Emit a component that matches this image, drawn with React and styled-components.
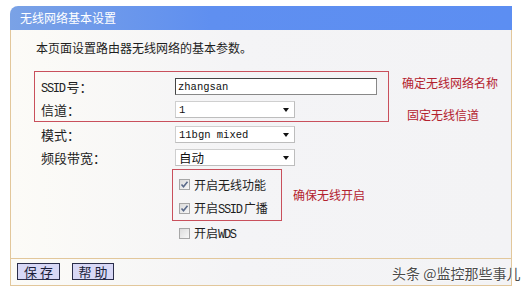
import React from 'react';
import styled, { createGlobalStyle } from 'styled-components';

const Global = createGlobalStyle`
  html, body { margin: 0; padding: 0; background: #fff; }
  body { font-family: "Noto Sans CJK SC", "Liberation Sans", sans-serif; color: #222; }
`;

const Page = styled.div`
  position: relative;
  width: 521px;
  height: 292px;
  box-sizing: border-box;
  padding: 6px 0 0 10px;
  overflow: hidden;
`;

const Panel = styled.div`
  width: 502px;
  display: flex;
  flex-direction: column;
`;

const Header = styled.div`
  height: 24px;
  line-height: 24px;
  padding-left: 10px;
  border-radius: 8px 0 0 0;
  background: linear-gradient(to right, #7aa2e6, #5f8ff0 40%, #5c8ef2);
  color: #fff;
  font-size: 12px;
`;

const Frame = styled.div`
  border: 1px solid #e2c79b;
  border-top: none;
  background: linear-gradient(to right, #fcfbf7, #f4f4f6 45%, #f3f3f5);
`;

const Body = styled.div`
  padding: 9px 0 13px 23px;
  display: flex;
  flex-direction: column;
`;

const Intro = styled.div`
  font-size: 12px;
  line-height: 18px;
  height: 18px;
  padding-left: 2px;
  margin-bottom: 14px;
  color: #1e1e1e;
`;

const Band = styled.div`
  display: flex;
  align-items: ${(p) => p.$align || 'flex-start'};
  margin-left: ${(p) => p.$indent || 0}px;
`;

const RedBox = styled.div`
  width: ${(p) => p.$w}px;
  box-sizing: border-box;
  border: 1px solid #c9505c;
  padding: ${(p) => p.$pt || 0}px 0 0 6px;
`;

const Notes = styled.div`
  display: flex;
  flex-direction: column;
  padding-left: ${(p) => p.$pl}px;
`;

const Note = styled.div`
  font-size: 12px;
  line-height: 16px;
  color: #b3222f;
  margin-top: ${(p) => p.$mt || 0}px;
  margin-left: ${(p) => p.$ml || 0}px;
`;

const Rows = styled.div`
  padding-left: 7px;
`;

const Row = styled.div`
  display: flex;
  align-items: center;
  height: ${(p) => p.$h || 23}px;
`;

const Label = styled.div`
  width: 134px;
  font-size: 13px;
  color: #222;
  white-space: nowrap;
`;

const Mono = styled.span`
  font-family: "Liberation Mono", monospace;
  font-size: 12px;
  letter-spacing: -1.3px;
  margin-right: 2px;
`;

const TextInput = styled.div`
  width: 202px;
  height: 17px;
  box-sizing: border-box;
  border: 1px solid #444;
  border-right-color: #888;
  border-bottom-color: #888;
  background: #fff;
  padding-left: 2px;
  display: flex;
  align-items: center;
  font-family: "Liberation Mono", monospace;
  font-size: 10.5px;
  color: #111;
`;

const Select = styled.div`
  width: 120px;
  height: 17px;
  box-sizing: border-box;
  border: 1px solid #cfcfcf;
  border-right-color: #bdbdbd;
  border-bottom-color: #bdbdbd;
  background: #fff;
  display: flex;
  align-items: center;
  justify-content: space-between;
  padding: 0 5px 0 3px;
  font-size: 12.5px;
  color: #111;
`;

const SelectMono = styled.span`
  font-family: "Liberation Mono", monospace;
  font-size: 10.5px;
`;

const Arrow = styled.span`
  width: 0;
  height: 0;
  border-left: 3.5px solid transparent;
  border-right: 3.5px solid transparent;
  border-top: 4px solid #111;
`;

const CheckRow = styled.div`
  display: flex;
  align-items: center;
  height: 24px;
  padding-left: ${(p) => p.$pl || 0}px;
  font-size: 12px;
  color: #1e1e1e;
`;

const CheckText = styled.span`
  white-space: nowrap;
`;

const Box = styled.span`
  width: 11px;
  height: 11px;
  flex: none;
  box-sizing: border-box;
  border: 1px solid #a7a7a7;
  background: linear-gradient(135deg, #dcdcdc, #f7f7f7);
  margin-right: 4px;
  display: inline-flex;
  align-items: center;
  justify-content: center;
`;

const Footer = styled.div`
  border-top: 1px solid #e2c79b;
  padding: 4px 0 5px 6px;
  display: flex;
  gap: 12px;
`;

const Button = styled.div`
  width: ${(p) => p.$w}px;
  height: 17px;
  box-sizing: border-box;
  border: 1px solid #2a2d4a;
  background: #d8d8f6;
  color: #1c1f3a;
  font-size: 13px;
  line-height: 15px;
  display: flex;
  justify-content: center;
  gap: 3px;
`;

const Watermark = styled.div`
  position: absolute;
  left: 392px;
  top: 264px;
  font-size: 14px;
  line-height: 18px;
  color: #4b4b4b;
  white-space: nowrap;
  text-shadow: 0 0 2px #fff, 0 0 2px #fff, 0 0 1px #fff;
`;

function Check({ checked }) {
  return (
    <Box>
      {checked && (
        <svg width="9" height="9" viewBox="0 0 9 9">
          <path d="M1.5 4.5 L3.5 6.8 L7.5 1.8" fill="none" stroke="#5a6a8a" strokeWidth="1.6" />
        </svg>
      )}
    </Box>
  );
}

export default function App() {
  return (
    <Page>
      <Global />
      <Panel>
        <Header>无线网络基本设置</Header>
        <Frame>
          <Body>
            <Intro>本页面设置路由器无线网络的基本参数。</Intro>
            <Band>
              <RedBox $w={355} $pt={3}>
                <Row>
                  <Label><Mono>SSID</Mono>号：</Label>
                  <TextInput>zhangsan</TextInput>
                </Row>
                <Row>
                  <Label>信道：</Label>
                  <Select><SelectMono>1</SelectMono><Arrow /></Select>
                </Row>
              </RedBox>
              <Notes $pl={13}>
                <Note $mt={4}>确定无线网络名称</Note>
                <Note $mt={16} $ml={5}>固定无线信道</Note>
              </Notes>
            </Band>
            <Rows>
              <Row>
                <Label>模式：</Label>
                <Select><SelectMono>11bgn mixed</SelectMono><Arrow /></Select>
              </Row>
              <Row>
                <Label>频段带宽：</Label>
                <Select><span>自动</span><Arrow /></Select>
              </Row>
            </Rows>
            <Band $indent={138} $align="center">
              <RedBox $w={110} $pt={2}>
                <CheckRow><Check checked /><CheckText>开启无线功能</CheckText></CheckRow>
                <CheckRow><Check checked /><CheckText>开启<Mono>SSID</Mono>广播</CheckText></CheckRow>
              </RedBox>
              <Notes $pl={11}>
                <Note>确保无线开启</Note>
              </Notes>
            </Band>
            <CheckRow $pl={145}><Check /><CheckText>开启<Mono>WDS</Mono></CheckText></CheckRow>
          </Body>
          <Footer>
            <Button $w={43}><span>保</span><span>存</span></Button>
            <Button $w={42}><span>帮</span><span>助</span></Button>
          </Footer>
        </Frame>
      </Panel>
      <Watermark>头条 @监控那些事儿</Watermark>
    </Page>
  );
}
